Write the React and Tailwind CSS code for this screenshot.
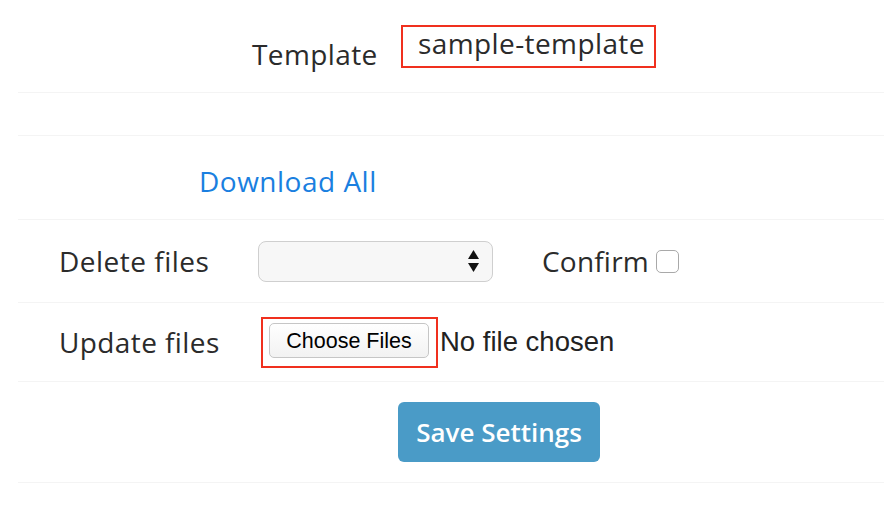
import React from 'react';

const font = { fontFamily: '"Open Sans", sans-serif' };

export default function App() {
  return (
    <div className="h-[532px] w-[884px] overflow-hidden bg-white text-[#2b2b2b]" style={font}>
      <div className="ml-[18px] flex flex-col">
        <div className="flex h-[93px] border-b border-[#f4f4f4]">
          <span className="ml-[234px] mt-[37px] w-[149px] shrink-0 text-[28px] leading-[34px] tracking-[0.4px]">Template</span>
          <div className="mt-[25px] h-[43px] w-[255px] shrink-0 border-2 border-[#f0301e] pl-[15px]">
            <span className="text-[28px] leading-[32px] tracking-[0.4px]">sample-template</span>
          </div>
        </div>

        <div className="h-[43px] border-b border-[#f4f4f4]" />

        <div className="flex h-[84px] items-center border-b border-[#f4f4f4] pt-[6px]">
          <a href="#" className="ml-[181px] text-[28px] tracking-[0.5px] text-[#1a7fe0]">Download All</a>
        </div>

        <div className="flex h-[83px] items-center border-b border-[#f4f4f4]">
          <span className="ml-[41px] w-[199px] shrink-0 text-[28px] tracking-[0.5px]">Delete files</span>
          <div className="flex h-[41px] w-[235px] shrink-0 items-center justify-end rounded-[8px] border border-[#cfcfcf] bg-[#f7f7f7] pr-[12px]">
            <svg width="13" height="26" viewBox="0 0 13 26">
              <path d="M6.5 2 L12 11 L1 11 Z" fill="#111" />
              <path d="M6.5 24 L12 15 L1 15 Z" fill="#111" />
            </svg>
          </div>
          <span className="ml-[49px] w-[114px] shrink-0 text-[28px] tracking-[0.2px]">Confirm</span>
          <span className="h-[23px] w-[23px] shrink-0 rounded-[5px] border border-[#a9a9a9] bg-white" />
        </div>

        <div className="flex h-[79px] items-center border-b border-[#f4f4f4]">
          <span className="ml-[41px] w-[202px] shrink-0 text-[28px] tracking-[0.4px]">Update files</span>
          <div className="flex h-[51px] w-[177px] shrink-0 items-start border-2 border-[#f0301e] pl-[6px] pt-[4px]">
            <button
              type="button"
              className="flex h-[35px] w-[160px] items-center justify-center rounded-[5px] border border-[#c6c6c6] bg-gradient-to-b from-white to-[#f2f2f2] pt-[2px] text-[21.5px] text-black"
              style={{ fontFamily: '"Liberation Sans", Arial, sans-serif' }}
            >
              Choose Files
            </button>
          </div>
          <span className="ml-[2px] text-[27.5px] text-[#222]" style={{ fontFamily: '"Liberation Sans", Arial, sans-serif' }}>
            No file chosen
          </span>
        </div>

        <div className="flex h-[101px] items-center border-b border-[#f4f4f4]">
          <button
            type="button"
            className="ml-[380px] h-[60px] w-[202px] rounded-[6px] bg-[#4a9bc7] text-[26px] font-semibold text-white"
          >
            Save Settings
          </button>
        </div>
      </div>
    </div>
  );
}
